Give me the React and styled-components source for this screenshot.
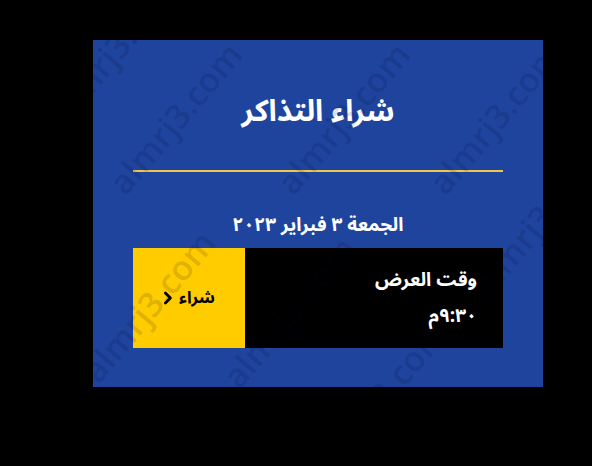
import React from "react";
import styled, { createGlobalStyle } from "styled-components";

const Global = createGlobalStyle`
  html, body { margin: 0; padding: 0; background: #000; }
  body { font-family: "Noto Sans Arabic", "DejaVu Sans", sans-serif; }
`;

const Page = styled.div`
  width: 592px;
  height: 466px;
  background: #000;
  padding: 40px 0 0 93px;
  box-sizing: border-box;
`;

const Panel = styled.section`
  position: relative;
  overflow: hidden;
  width: 450px;
  height: 347px;
  box-sizing: border-box;
  background: #1f449e;
  padding: 0 40px;
  direction: rtl;
  display: flex;
  flex-direction: column;
  color: #fff;
`;

const Title = styled.h1`
  margin: 0;
  height: 130px;
  display: flex;
  align-items: center;
  justify-content: center;
  font-size: 30px;
  font-weight: 700;
  padding-top: 12px;
  box-sizing: border-box;
`;

const Divider = styled.hr`
  margin: 0;
  border: none;
  height: 2px;
  background: #eec64a;
`;

const DateLine = styled.h2`
  margin: 0;
  height: 76px;
  display: flex;
  align-items: center;
  justify-content: center;
  font-size: 19px;
  font-weight: 700;
  padding-top: 30px;
  box-sizing: border-box;
`;

const Showtime = styled.div`
  display: flex;
  height: 100px;
  background: #000;
`;

const Info = styled.div`
  flex: 1;
  display: flex;
  flex-direction: column;
  justify-content: center;
  padding-right: 26px;
  gap: 4px;
`;

const InfoText = styled.div`
  font-size: ${(p) => p.size || 18}px;
  font-weight: 700;
  line-height: 32px;
`;

const BuyButton = styled.button`
  width: 112px;
  border: none;
  background: #ffcc00;
  color: #000;
  font-family: inherit;
  font-size: 17px;
  font-weight: 700;
  display: flex;
  align-items: center;
  justify-content: center;
  gap: 6px;
  padding: 0;
  direction: rtl;
`;

const Watermark = styled.span`
  position: absolute;
  left: ${(p) => p.x}px;
  top: ${(p) => p.y}px;
  transform: translate(-50%, -50%) rotate(-50deg);
  font-family: "Open Sans", "DejaVu Sans", sans-serif;
  font-size: 34px;
  font-weight: 600;
  color: rgba(0, 0, 40, 0.15);
  white-space: nowrap;
  pointer-events: none;
  direction: ltr;
`;

const marks = [
  [22, 8],
  [82, 78],
  [250, 78],
  [402, 78],
  [55, 266],
  [196, 272],
  [445, 180],
  [287, 357],
];

const Chevron = () => (
  <svg width="10" height="14" viewBox="0 0 10 14" aria-hidden="true">
    <path d="M2.4 2 L7.4 7 L2.4 12" fill="none" stroke="#000" strokeWidth="2.8" strokeLinecap="round" strokeLinejoin="round" />
  </svg>
);

export default function App() {
  return (
    <>
      <Global />
      <Page>
        <Panel>
          <Title>شراء التذاكر</Title>
          <Divider />
          <DateLine>الجمعة ٣ فبراير ٢٠٢٣</DateLine>
          <Showtime>
            <Info>
              <InfoText size={19}>وقت العرض</InfoText>
              <InfoText size={19}>٩:٣٠م</InfoText>
            </Info>
            <BuyButton>
              <span>شراء</span>
              <Chevron />
            </BuyButton>
          </Showtime>
          {marks.map(([x, y], i) => (
            <Watermark key={i} x={x} y={y}>almrj3.com</Watermark>
          ))}
        </Panel>
      </Page>
    </>
  );
}
